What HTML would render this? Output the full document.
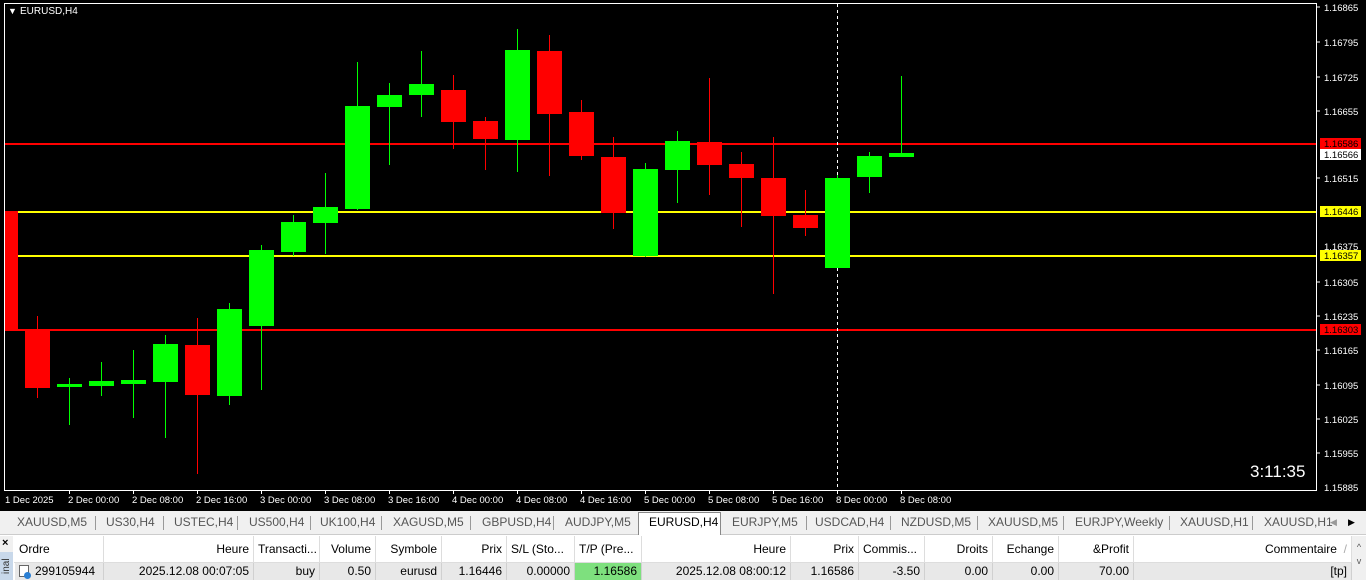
<!DOCTYPE html>
<html><head><meta charset="utf-8"><style>
*{margin:0;padding:0;box-sizing:border-box}
body{width:1366px;height:580px;overflow:hidden;background:#fff;font-family:"Liberation Sans",sans-serif;position:relative}
#chart{position:absolute;left:0;top:0;width:1366px;height:511px;background:#000}
.tabs{position:absolute;left:0;top:511px;width:1366px;height:24px;background:#f0f0f0;border-bottom:1px solid #ccc;font-size:12px;color:#555}
.tabs span{position:absolute;top:4px}
.tabs i{position:absolute;top:5px;width:1px;height:14px;background:#999}
.tbl{position:absolute;top:536px;left:0;width:1366px;height:44px;font-size:12px;color:#000}
.c{position:absolute;height:26px;line-height:26px;border-right:1px solid #ddd;padding:0 4px;white-space:nowrap;overflow:hidden}
.r{text-align:right}
.row .c{height:17px;line-height:17px;background:#e8e8e8;border-right:1px solid #d0d0d0}
</style></head><body>
<svg id="chart" width="1366" height="511" xmlns="http://www.w3.org/2000/svg" font-family="Liberation Sans, sans-serif">
<rect x="0" y="0" width="1366" height="511" fill="#000"/>
<rect x="4.5" y="3.5" width="1312" height="487" fill="none" stroke="#fff" stroke-width="1"/>
<g fill="#fff" font-size="9.5">
<text x="8" y="14" font-size="9">▼</text><text x="20" y="14" font-size="10">EURUSD,H4</text>
</g>
<!-- horizontal lines -->
<rect x="5" y="143" width="1311" height="2" fill="#f00"/>
<rect x="5" y="211" width="1311" height="2" fill="#ff0"/>
<rect x="5" y="255" width="1311" height="2" fill="#ff0"/>
<rect x="5" y="329" width="1311" height="2" fill="#f00"/>
<line x1="837.5" y1="4" x2="837.5" y2="490" stroke="#fff" stroke-dasharray="3,3"/>
<!-- candles -->
<g id="cd">
<rect x="5" y="211" width="13" height="120" fill="#f00"/>
<rect x="37" y="316" width="1" height="82" fill="#f00"/><rect x="25" y="330" width="25" height="58" fill="#f00"/>
<rect x="69" y="378" width="1" height="47" fill="#0f0"/><rect x="57" y="384" width="25" height="3" fill="#0f0"/>
<rect x="101" y="362" width="1" height="34" fill="#0f0"/><rect x="89" y="381" width="25" height="5" fill="#0f0"/>
<rect x="133" y="350" width="1" height="68" fill="#0f0"/><rect x="121" y="380" width="25" height="4" fill="#0f0"/>
<rect x="165" y="335" width="1" height="103" fill="#0f0"/><rect x="153" y="344" width="25" height="38" fill="#0f0"/>
<rect x="197" y="318" width="1" height="156" fill="#f00"/><rect x="185" y="345" width="25" height="50" fill="#f00"/>
<rect x="229" y="303" width="1" height="102" fill="#0f0"/><rect x="217" y="309" width="25" height="87" fill="#0f0"/>
<rect x="261" y="245" width="1" height="145" fill="#0f0"/><rect x="249" y="250" width="25" height="76" fill="#0f0"/>
<rect x="293" y="215" width="1" height="41" fill="#0f0"/><rect x="281" y="222" width="25" height="30" fill="#0f0"/>
<rect x="325" y="173" width="1" height="81" fill="#0f0"/><rect x="313" y="207" width="25" height="16" fill="#0f0"/>
<rect x="357" y="62" width="1" height="148" fill="#0f0"/><rect x="345" y="106" width="25" height="103" fill="#0f0"/>
<rect x="389" y="83" width="1" height="82" fill="#0f0"/><rect x="377" y="95" width="25" height="12" fill="#0f0"/>
<rect x="421" y="51" width="1" height="66" fill="#0f0"/><rect x="409" y="84" width="25" height="11" fill="#0f0"/>
<rect x="453" y="75" width="1" height="74" fill="#f00"/><rect x="441" y="90" width="25" height="32" fill="#f00"/>
<rect x="485" y="117" width="1" height="53" fill="#f00"/><rect x="473" y="121" width="25" height="18" fill="#f00"/>
<rect x="517" y="29" width="1" height="143" fill="#0f0"/><rect x="505" y="50" width="25" height="90" fill="#0f0"/>
<rect x="549" y="35" width="1" height="141" fill="#f00"/><rect x="537" y="51" width="25" height="63" fill="#f00"/>
<rect x="581" y="100" width="1" height="60" fill="#f00"/><rect x="569" y="112" width="25" height="44" fill="#f00"/>
<rect x="613" y="137" width="1" height="92" fill="#f00"/><rect x="601" y="157" width="25" height="56" fill="#f00"/>
<rect x="645" y="163" width="1" height="94" fill="#0f0"/><rect x="633" y="169" width="25" height="87" fill="#0f0"/>
<rect x="677" y="131" width="1" height="72" fill="#0f0"/><rect x="665" y="141" width="25" height="29" fill="#0f0"/>
<rect x="709" y="78" width="1" height="117" fill="#f00"/><rect x="697" y="142" width="25" height="23" fill="#f00"/>
<rect x="741" y="152" width="1" height="75" fill="#f00"/><rect x="729" y="164" width="25" height="14" fill="#f00"/>
<rect x="773" y="137" width="1" height="157" fill="#f00"/><rect x="761" y="178" width="25" height="38" fill="#f00"/>
<rect x="805" y="190" width="1" height="46" fill="#f00"/><rect x="793" y="215" width="25" height="13" fill="#f00"/>
<rect x="837" y="175" width="1" height="92" fill="#0f0"/><rect x="825" y="178" width="25" height="90" fill="#0f0"/>
<rect x="869" y="152" width="1" height="41" fill="#0f0"/><rect x="857" y="156" width="25" height="21" fill="#0f0"/>
<rect x="901" y="76" width="1" height="80" fill="#0f0"/><rect x="889" y="153" width="25" height="4" fill="#0f0"/>
</g>
<!-- price axis -->
<g fill="#fff" font-size="9.5">
<text x="1324" y="11">1.16865</text><text x="1324" y="46">1.16795</text><text x="1324" y="81">1.16725</text>
<text x="1324" y="115">1.16655</text><text x="1324" y="182">1.16515</text><text x="1324" y="250">1.16375</text>
<text x="1324" y="286">1.16305</text><text x="1324" y="320">1.16235</text><text x="1324" y="354">1.16165</text>
<text x="1324" y="389">1.16095</text><text x="1324" y="423">1.16025</text><text x="1324" y="457">1.15955</text><text x="1324" y="491">1.15885</text>
</g>
<g stroke="#fff"><line x1="1317" y1="7" x2="1320" y2="7"/><line x1="1317" y1="42" x2="1320" y2="42"/><line x1="1317" y1="77" x2="1320" y2="77"/><line x1="1317" y1="111" x2="1320" y2="111"/><line x1="1317" y1="178" x2="1320" y2="178"/><line x1="1317" y1="282" x2="1320" y2="282"/><line x1="1317" y1="316" x2="1320" y2="316"/><line x1="1317" y1="350" x2="1320" y2="350"/><line x1="1317" y1="385" x2="1320" y2="385"/><line x1="1317" y1="419" x2="1320" y2="419"/><line x1="1317" y1="453" x2="1320" y2="453"/></g>
<rect x="1320" y="138" width="41" height="11" fill="#f00"/><text x="1324" y="147" font-size="9.5" fill="#000">1.16586</text>
<rect x="1320" y="149" width="41" height="11" fill="#fff"/><text x="1324" y="158" font-size="9.5" fill="#000">1.16566</text>
<rect x="1320" y="206" width="41" height="11" fill="#ff0"/><text x="1324" y="215" font-size="9.5" fill="#000">1.16446</text>
<rect x="1320" y="250" width="41" height="11" fill="#ff0"/><text x="1324" y="259" font-size="9.5" fill="#000">1.16357</text>
<rect x="1320" y="324" width="41" height="11" fill="#f00"/><text x="1324" y="333" font-size="9.5" fill="#000">1.16303</text>
<text x="1250" y="477" font-size="17" fill="#fff">3:11:35</text>
<!-- time axis -->
<g fill="#fff" font-size="9.5">
<text x="5" y="503">1 Dec 2025</text><text x="68" y="503">2 Dec 00:00</text><text x="132" y="503">2 Dec 08:00</text><text x="196" y="503">2 Dec 16:00</text>
<text x="260" y="503">3 Dec 00:00</text><text x="324" y="503">3 Dec 08:00</text><text x="388" y="503">3 Dec 16:00</text><text x="452" y="503">4 Dec 00:00</text>
<text x="516" y="503">4 Dec 08:00</text><text x="580" y="503">4 Dec 16:00</text><text x="644" y="503">5 Dec 00:00</text><text x="708" y="503">5 Dec 08:00</text>
<text x="772" y="503">5 Dec 16:00</text><text x="836" y="503">8 Dec 00:00</text><text x="900" y="503">8 Dec 08:00</text>
</g>
<g stroke="#fff"><line x1="69.5" y1="490" x2="69.5" y2="494"/><line x1="133.5" y1="490" x2="133.5" y2="494"/><line x1="197.5" y1="490" x2="197.5" y2="494"/><line x1="261.5" y1="490" x2="261.5" y2="494"/><line x1="325.5" y1="490" x2="325.5" y2="494"/><line x1="389.5" y1="490" x2="389.5" y2="494"/><line x1="453.5" y1="490" x2="453.5" y2="494"/><line x1="517.5" y1="490" x2="517.5" y2="494"/><line x1="581.5" y1="490" x2="581.5" y2="494"/><line x1="645.5" y1="490" x2="645.5" y2="494"/><line x1="709.5" y1="490" x2="709.5" y2="494"/><line x1="773.5" y1="490" x2="773.5" y2="494"/><line x1="837.5" y1="490" x2="837.5" y2="494"/><line x1="901.5" y1="490" x2="901.5" y2="494"/></g>
</svg>
<div class="tabs">
<span style="left:17px">XAUUSD,M5</span><i style="left:95px"></i>
<span style="left:106px">US30,H4</span><i style="left:163px"></i>
<span style="left:174px">USTEC,H4</span><i style="left:237px"></i>
<span style="left:249px">US500,H4</span><i style="left:310px"></i>
<span style="left:320px">UK100,H4</span><i style="left:381px"></i>
<span style="left:393px">XAGUSD,M5</span><i style="left:470px"></i>
<span style="left:482px">GBPUSD,H4</span><i style="left:553px"></i>
<span style="left:565px">AUDJPY,M5</span>
<div style="position:absolute;left:638px;top:1px;width:83px;height:23px;background:#fff;border:1px solid #888;border-bottom:none"></div>
<span style="left:649px;color:#000">EURUSD,H4</span>
<span style="left:732px">EURJPY,M5</span><i style="left:806px"></i>
<span style="left:815px">USDCAD,H4</span><i style="left:890px"></i>
<span style="left:901px">NZDUSD,M5</span><i style="left:977px"></i>
<span style="left:988px">XAUUSD,M5</span><i style="left:1063px"></i>
<span style="left:1075px">EURJPY,Weekly</span><i style="left:1169px"></i>
<span style="left:1180px">XAUUSD,H1</span><i style="left:1252px"></i>
<span style="left:1264px">XAUUSD,H1</span>
<span style="left:1330px;font-size:9px;top:6px;color:#999">◀</span><span style="left:1348px;font-size:9px;top:6px;color:#000">▶</span>
</div>
<div class="tbl">
<div style="position:absolute;left:0;top:0;width:13px;height:44px;background:#f0f0f0"></div>
<div style="position:absolute;left:2px;top:1px;font-size:11px;font-weight:bold">×</div>
<div style="position:absolute;left:0;top:16px;width:13px;height:28px;background:#c8d8ea;font-size:10px;color:#333;writing-mode:vertical-rl;transform:rotate(180deg);text-align:center;line-height:13px">inal</div>
<div style="position:absolute;left:14px;top:0;width:1338px;height:27px;background:#fff;border-bottom:1px solid #ddd"></div>
<div class="c" style="left:15px;width:89px;top:0">Ordre</div>
<div class="c r" style="left:104px;width:150px;top:0">Heure</div>
<div class="c" style="left:254px;width:66px;top:0">Transacti...</div>
<div class="c r" style="left:320px;width:56px;top:0">Volume</div>
<div class="c r" style="left:376px;width:66px;top:0">Symbole</div>
<div class="c r" style="left:442px;width:65px;top:0">Prix</div>
<div class="c" style="left:507px;width:68px;top:0">S/L (Sto...</div>
<div class="c" style="left:575px;width:67px;top:0">T/P (Pre...</div>
<div class="c r" style="left:642px;width:149px;top:0">Heure</div>
<div class="c r" style="left:791px;width:68px;top:0">Prix</div>
<div class="c" style="left:859px;width:66px;top:0">Commis...</div>
<div class="c r" style="left:925px;width:68px;top:0">Droits</div>
<div class="c r" style="left:993px;width:66px;top:0">Echange</div>
<div class="c r" style="left:1059px;width:75px;top:0">&amp;Profit</div>
<div class="c r" style="left:1134px;width:218px;top:0">Commentaire &nbsp;<span style="color:#aaa">/</span></div>
<div style="position:absolute;left:1352px;top:0;width:14px;height:44px;background:#f0f0f0;font-size:9px;color:#555;text-align:center;line-height:14px;padding-top:4px">^<br>v</div>
<div class="row">
<div class="c" style="left:15px;width:89px;top:27px"><span style="display:inline-block;width:10px;height:12px;border:1px solid #666;background:#fff;vertical-align:-2px;margin-right:6px;position:relative"><span style="position:absolute;left:4px;top:6px;width:7px;height:7px;border-radius:50%;background:#2a7fd4"></span></span>299105944</div>
<div class="c r" style="left:104px;width:150px;top:27px">2025.12.08 00:07:05</div>
<div class="c r" style="left:254px;width:66px;top:27px">buy</div>
<div class="c r" style="left:320px;width:56px;top:27px">0.50</div>
<div class="c r" style="left:376px;width:66px;top:27px">eurusd</div>
<div class="c r" style="left:442px;width:65px;top:27px">1.16446</div>
<div class="c r" style="left:507px;width:68px;top:27px">0.00000</div>
<div class="c r" style="left:575px;width:67px;top:27px;background:#7ee07e">1.16586</div>
<div class="c r" style="left:642px;width:149px;top:27px">2025.12.08 08:00:12</div>
<div class="c r" style="left:791px;width:68px;top:27px">1.16586</div>
<div class="c r" style="left:859px;width:66px;top:27px">-3.50</div>
<div class="c r" style="left:925px;width:68px;top:27px">0.00</div>
<div class="c r" style="left:993px;width:66px;top:27px">0.00</div>
<div class="c r" style="left:1059px;width:75px;top:27px">70.00</div>
<div class="c r" style="left:1134px;width:218px;top:27px">[tp]</div>
</div>
</div>
</body></html>
